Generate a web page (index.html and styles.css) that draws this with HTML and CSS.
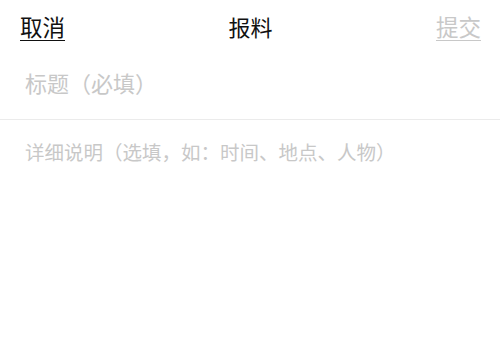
FILE: index.html
```html
<!DOCTYPE html>
<html lang="zh">
<head>
<meta charset="utf-8">
<link rel="stylesheet" href="styles.css">
</head>
<body>
<div class="page">
  <header class="bar">
    <a class="link cancel">取消</a>
    <div class="title">报料</div>
    <a class="link submit">提交</a>
  </header>
  <div class="field title-field">标题（必填）</div>
  <div class="field desc-field">详细说明（选填，如：时间、地点、人物）</div>
</div>
</body>
</html>
```
FILE: styles.css
```css
html, body { margin: 0; padding: 0; background: #fff; }
body { font-family: "Liberation Serif", "Noto Sans CJK SC", serif; }
.page { width: 500px; height: 345px; }
.bar {
  display: flex;
  align-items: center;
  justify-content: space-between;
  height: 54px;
  padding: 0 19px 2px 20px;
  box-sizing: border-box;
}
.link { font-size: 22.5px; text-decoration: underline; text-underline-offset: 4px; text-decoration-thickness: 1px; }
.cancel { color: #111; }
.submit { color: #c8c8c8; }
.title { font-size: 22px; color: #111; }
.field { padding: 0 25px; color: #c8c8c8; }
.title-field {
  font-size: 22px;
  height: 65px;
  line-height: 62px;
  border-bottom: 1px solid #ebebeb;
}
.desc-field { font-size: 19.5px; padding-top: 20px; line-height: 28px; }
```
